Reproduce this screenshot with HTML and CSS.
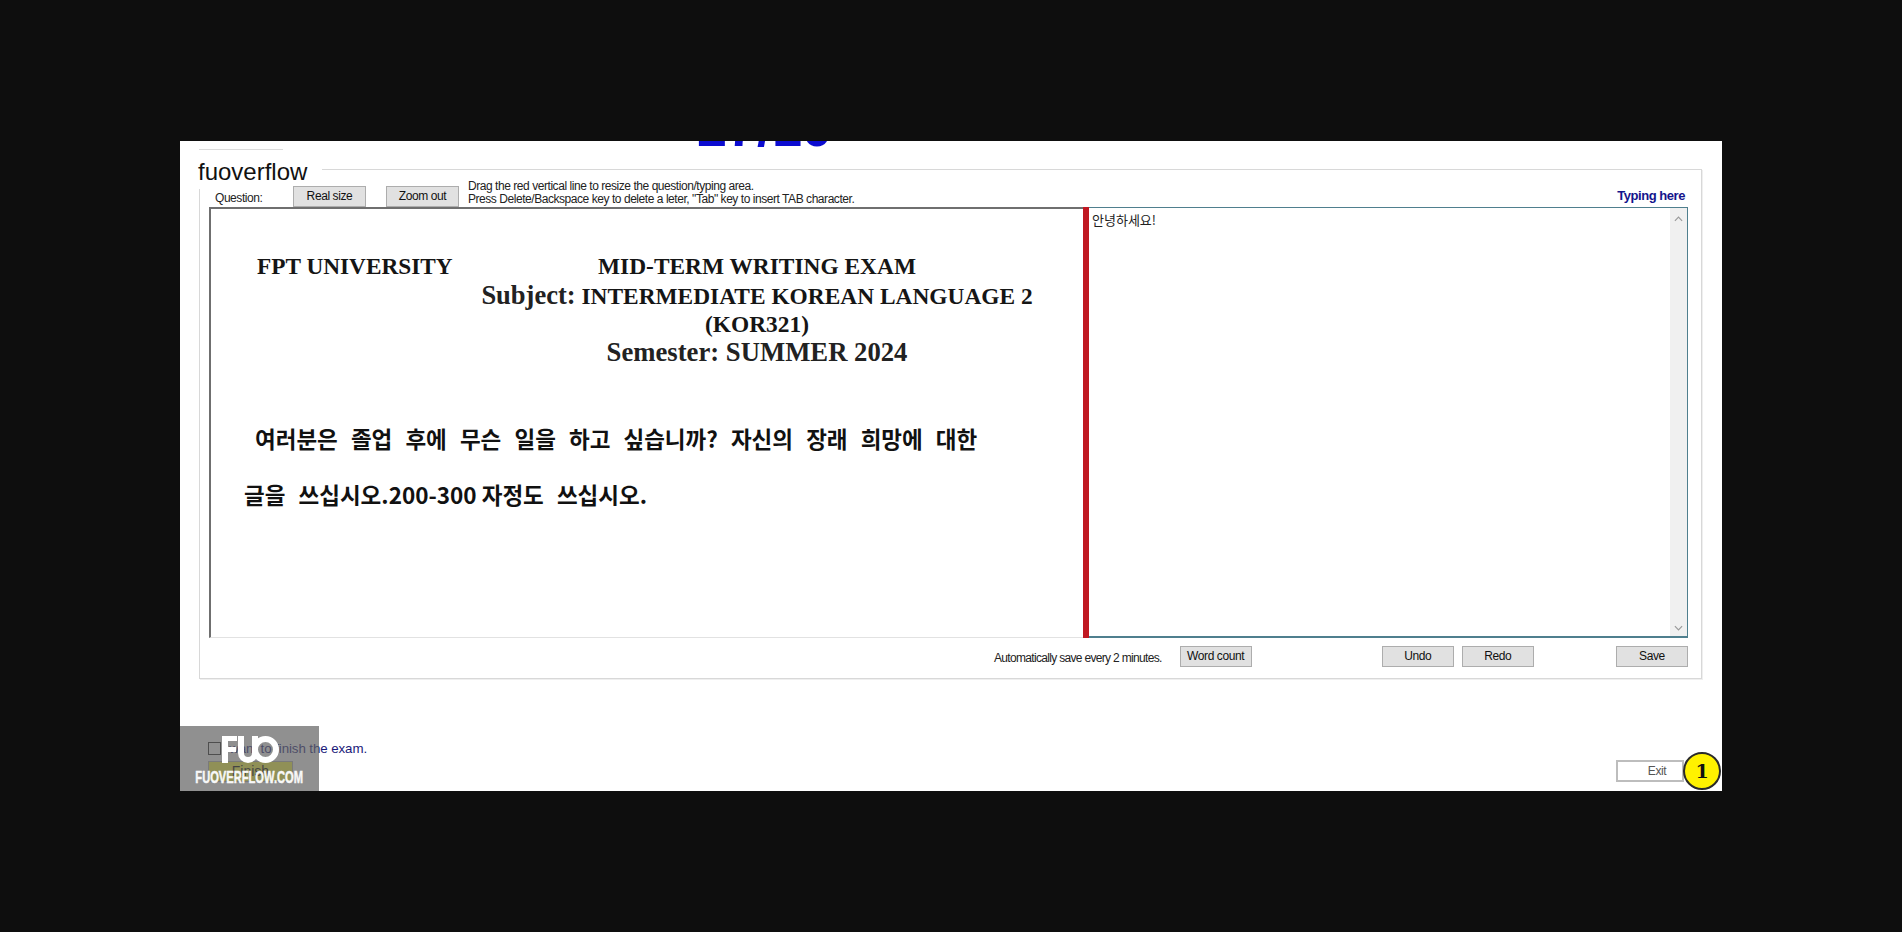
FILE: index.html
```html
<!DOCTYPE html>
<html lang="en">
<head>
<meta charset="utf-8">
<title>Exam</title>
<link rel="stylesheet" href="styles.css">
</head>
<body>
<main class="screen">
  <div class="timer">27/10</div>
  <div class="tab-line"></div>
  <section class="group">
    <h1 class="legend">fuoverflow</h1>
    <div class="toolbar">
      <span class="q-label">Question:</span>
      <button class="btn btn-real">Real size</button>
      <button class="btn btn-zoom">Zoom out</button>
      <p class="hint">Drag the red vertical line to resize the question/typing area.<br>Press Delete/Backspace key to delete a leter, "Tab" key to insert TAB character.</p>
      <span class="typing">Typing here</span>
    </div>
    <div class="work">
      <div class="question">
        <div class="head-row">
          <div class="uni">FPT UNIVERSITY</div>
          <div class="titles">
            <div class="t-exam">MID-TERM WRITING EXAM</div>
            <div class="t-sub"><span class="big">Subject:</span> INTERMEDIATE KOREAN LANGUAGE 2</div>
            <div class="t-code">(KOR321)</div>
            <div class="t-sem">Semester: SUMMER 2024</div>
          </div>
        </div>
        <p class="ko ko-1">여러분은 졸업 후에 무슨 일을 하고 싶습니까? 자신의 장래 희망에 대한</p>
        <p class="ko ko-2">글을 쓰십시오.<span class="tight">200-300 자정도</span> 쓰십시오.</p>
      </div>
      <div class="divider"></div>
      <div class="answer">
        <div class="answer-text">안녕하세요!</div>
        <div class="scroll">
          <svg class="arrow" viewBox="0 0 10 6"><path d="M1 5l4-4 4 4" fill="none" stroke="#9a9a9a" stroke-width="1.3"/></svg>
          <svg class="arrow" viewBox="0 0 10 6"><path d="M1 1l4 4 4-4" fill="none" stroke="#9a9a9a" stroke-width="1.3"/></svg>
        </div>
      </div>
    </div>
    <div class="actions">
      <span class="autosave">Automatically save every 2 minutes.</span>
      <button class="btn btn-word">Word count</button>
      <button class="btn btn-undo">Undo</button>
      <button class="btn btn-redo">Redo</button>
      <button class="btn btn-save">Save</button>
    </div>
  </section>
  <footer class="bottom">
    <div class="finish">
      <label class="check"><span class="box"></span><span>I want to finish the exam.</span></label>
      <button class="btn btn-finish">Finish</button>
    </div>
    <button class="btn btn-exit">Exit</button>
  </footer>
  <div class="watermark">
    <svg class="wm-logo" viewBox="0 0 57 27">
      <path d="M0 0h15v5H6v6h8v5H6v11H0z" fill="#fff"/>
      <path d="M19 0v17a7 7 0 0 0 14 0V0" fill="none" stroke="#fff" stroke-width="6"/>
      <circle cx="43.5" cy="13.5" r="10.5" fill="none" stroke="#fff" stroke-width="6"/>
    </svg>
    <div class="wm-text">FUOVERFLOW.COM</div>
  </div>
  <div class="badge">1</div>
</main>
</body>
</html>
```
FILE: styles.css
```css
* { box-sizing: border-box; }
html, body { margin: 0; height: 100%; }
body {
  background: #0e0e0e;
  padding: 141px 180px 0;
  font-family: "Liberation Sans", Arial, sans-serif;
  overflow: hidden;
}
.screen {
  position: relative;
  width: 1542px;
  height: 650px;
  background: #fff;
  overflow: hidden;
  padding: 28px 20px 0 19px;
}
.timer {
  position: absolute;
  left: 517px;
  top: -44px;
  font-size: 54px;
  line-height: 60px;
  font-weight: 700;
  color: #0b0bd0;
}
.tab-line {
  position: absolute;
  left: 19px;
  top: 8px;
  width: 84px;
  height: 1px;
  background: #dcdcdc;
}
.group {
  position: relative;
  height: 510px;
  border: 1px solid #d8d8d8;
  box-shadow: 1px 1px 0 #efefef;
  padding: 20px 13px 0 9px;
}
.legend {
  position: absolute;
  left: -9px;
  top: -13px;
  margin: 0;
  padding: 0 15px 0 7px;
  height: 32px;
  background: #fff;
  font-size: 24px;
  line-height: 30px;
  font-weight: 400;
  color: #111;
}
.btn {
  height: 21px;
  padding: 0;
  border: 1px solid #adadad;
  background: #e1e1e1;
  color: #111;
  font: 12px/17px "Liberation Sans", Arial, sans-serif;
  letter-spacing: -.4px;
}
.toolbar {
  display: flex;
  align-items: flex-end;
  height: 17px;
  position: relative;
}
.q-label { font-size: 12px; letter-spacing: -.45px; margin-left: 6px; width: 78px; color: #222; line-height: 14px; margin-bottom: 2px; }
.btn-real { width: 73px; margin-right: 20px; align-self: flex-start; margin-top: -4px; }
.btn-zoom { width: 73px; margin-right: 9px; align-self: flex-start; margin-top: -4px; }
.hint {
  margin: 0;
  font-size: 12px;
  line-height: 13px;
  letter-spacing: -.45px;
  color: #222;
  align-self: flex-start;
  margin-top: -10px;
  white-space: nowrap;
}
.typing {
  margin-left: auto;
  font-size: 13px;
  font-weight: 700;
  color: #14148c;
  letter-spacing: -.45px;
  align-self: flex-start;
  margin-top: -2px;
  margin-right: 3px;
}
.work {
  display: flex;
  height: 431px;
}
.question {
  width: 874px;
  border-top: 2px solid #6f6f6f;
  border-left: 2px solid #6f6f6f;
  border-bottom: 1px solid #e2e2e2;
  padding: 45px 0 0 25px;
  flex: none;
}
.head-row { display: flex; font-family: "Liberation Serif", "Times New Roman", serif; font-weight: 700; color: #151515; }
.uni { width: 230px; font-size: 23.3px; line-height: 25px; padding-left: 21px; white-space: nowrap; }
.titles { width: 582px; text-align: center; font-size: 23.4px; }
.t-exam { line-height: 25px; height: 27px; }
.t-sub { line-height: 29px; height: 30px; white-space: nowrap; }
.t-code { line-height: 27px; height: 28px; }
.t-sem { line-height: 27px; font-size: 26.7px; color: #222; }
.big { font-size: 26.5px; color: #222; }
.ko {
  margin: 0;
  font-family: "Noto Sans CJK KR", sans-serif;
  font-weight: 700;
  font-size: 22.5px;
  line-height: 32px;
  color: #111;
  white-space: pre-wrap;
  word-spacing: 8px;
}
.ko-1 { margin-top: 56px; padding-left: 19px; }
.ko-2 { margin-top: 24px; padding-left: 8px; }
.tight { word-spacing: 0; }
.divider { width: 6px; background: #c01822; flex: none; }
.answer {
  flex: 1;
  display: flex;
  border-top: 1px solid #4f7f8e;
  border-right: 1px solid #4f7f8e;
  border-bottom: 2px solid #4f7f8e;
}
.answer-text {
  flex: 1;
  padding: 3px 0 0 3px;
  font-family: "Noto Sans CJK KR", sans-serif;
  font-size: 13px;
  line-height: 18px;
  color: #222;
}
.scroll {
  width: 17px;
  background: #f0f0f0;
  display: flex;
  flex-direction: column;
  justify-content: space-between;
  align-items: center;
  padding: 8px 0 5px;
}
.arrow { width: 9px; height: 6px; display: block; }
.actions {
  display: flex;
  align-items: center;
  height: 36px;
  padding-top: 1px;
}
.autosave { margin-left: 785px; width: 188px; font-size: 12px; letter-spacing: -.68px; color: #222; white-space: nowrap; margin-top: 2px; }
.btn-word { width: 73px; margin-right: 130px; }
.btn-undo { width: 73px; margin-right: 8px; }
.btn-redo { width: 73px; margin-right: 82px; }
.btn-save { width: 73px; }
.bottom {
  display: flex;
  justify-content: space-between;
  align-items: flex-end;
  height: 112px;
  padding: 0 26px 0 8px;
}
.finish { display: flex; flex-direction: column; padding-bottom: 9px; }
.check { display: flex; align-items: center; font-size: 13.3px; color: #1a1a7a; letter-spacing: -.08px; }
.box { width: 13px; height: 13px; margin: 0 1px 0 1px; border: 1px solid #222; background: #fff; }
.btn-finish { width: 85px; height: 21px; margin: 5px 0 0 1px; background: #ffff40; color: #000; font-size: 14px; letter-spacing: 0; border-color: #b5b5b5; }
.btn-exit {
  width: 68px;
  height: 22px;
  padding-left: 14px;
  background: #fff;
  border: 2px solid #bdbdbd;
  margin-bottom: 9px;
  margin-right: -8px;
  color: #555;
}
.watermark {
  position: absolute;
  left: 0;
  bottom: 0;
  width: 139px;
  height: 65px;
  background: rgba(97, 97, 97, .7);
  display: flex;
  flex-direction: column;
  align-items: center;
}
.wm-logo { width: 57px; height: 27px; margin: 10px 0 0 2px; }
.wm-text {
  font-size: 17px;
  line-height: 18px;
  margin-top: 6px;
  font-weight: 700;
  color: #f8f8f8;
  -webkit-text-stroke: .5px #f8f8f8;
  transform: scaleX(.655);
  white-space: nowrap;
}
.badge {
  position: absolute;
  right: 1px;
  bottom: 1px;
  width: 38px;
  height: 38px;
  border-radius: 50%;
  border: 2px solid #2a2a2a;
  background: #fff200;
  color: #111;
  font: 700 19px/34px "DejaVu Serif", serif;
  text-align: center;
}
```
